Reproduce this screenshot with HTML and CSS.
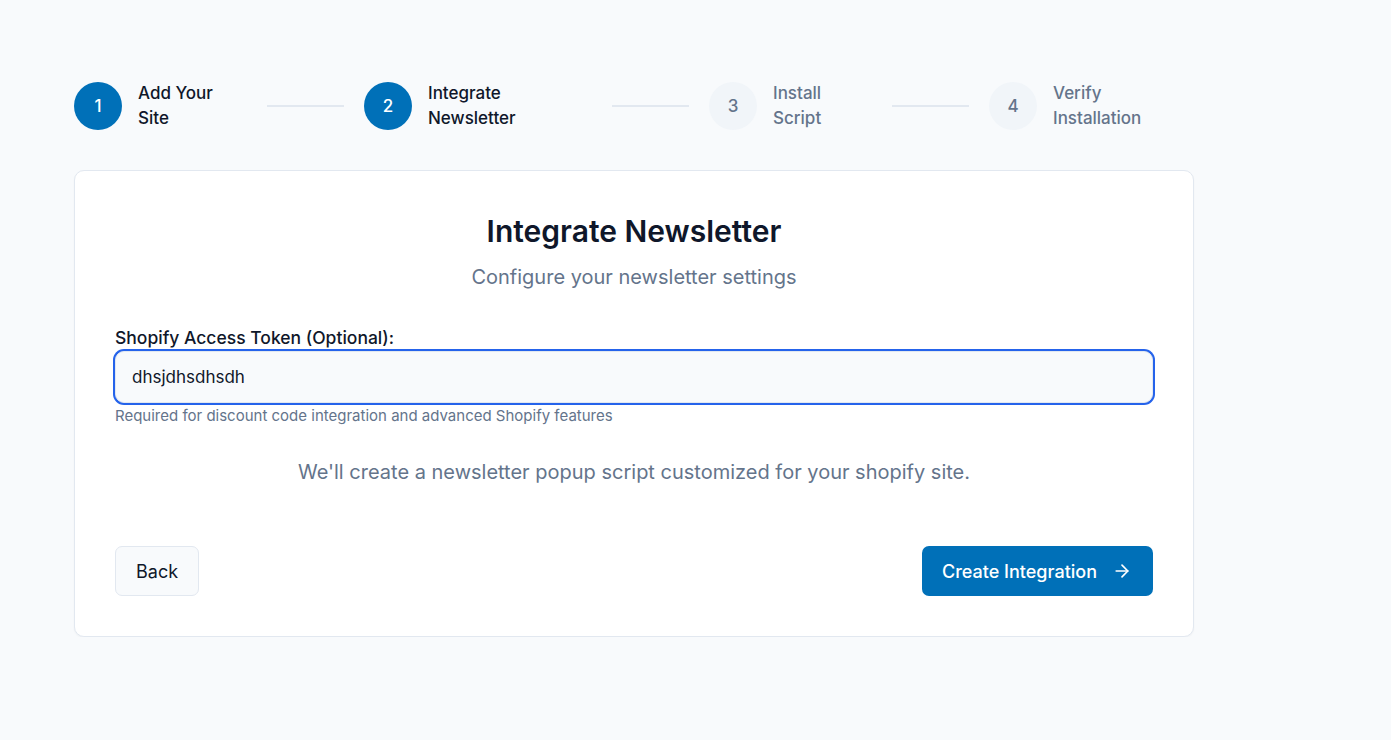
FILE: index.html
```html
<!DOCTYPE html>
<html lang="en">
<head>
<meta charset="utf-8">
<title>Integrate Newsletter</title>
<link rel="stylesheet" href="styles.css">
</head>
<body>
<main class="page">
  <div class="wrap">
    <ol class="stepper">
      <li class="step step-1 done">
        <span class="circle">1</span>
        <span class="label">Add Your Site</span>
      </li>
      <li class="connector"></li>
      <li class="step step-2 done">
        <span class="circle">2</span>
        <span class="label">Integrate Newsletter</span>
      </li>
      <li class="connector"></li>
      <li class="step step-3">
        <span class="circle">3</span>
        <span class="label">Install Script</span>
      </li>
      <li class="connector"></li>
      <li class="step step-4">
        <span class="circle">4</span>
        <span class="label">Verify Installation</span>
      </li>
    </ol>

    <section class="card">
      <header class="card-head">
        <h1 class="title">Integrate Newsletter</h1>
        <p class="subtitle">Configure your newsletter settings</p>
      </header>

      <div class="field">
        <label class="field-label" for="token">Shopify Access Token (Optional):</label>
        <input class="field-input" id="token" type="text" value="dhsjdhsdhsdh">
        <p class="field-help">Required for discount code integration and advanced Shopify features</p>
      </div>

      <p class="note">We'll create a newsletter popup script customized for your shopify site.</p>

      <div class="actions">
        <button class="btn btn-secondary" type="button">Back</button>
        <button class="btn btn-primary" type="button">
          <span>Create Integration</span>
          <svg class="icon" viewBox="0 0 24 24" width="20" height="20" fill="none" stroke="currentColor" stroke-width="2" stroke-linecap="round" stroke-linejoin="round" aria-hidden="true"><path d="M5 12h14"/><path d="m12 5 7 7-7 7"/></svg>
        </button>
      </div>
    </section>
  </div>
</main>
</body>
</html>
```

FILE: styles.css
```css
* { box-sizing: border-box; }

html, body {
  margin: 0;
  padding: 0;
  background: #f8fafc;
  font-family: Inter, "Noto Sans", "Liberation Sans", sans-serif;
  color: #0f172a;
}

.page {
  padding: 80px 0 0 74px;
}

.wrap {
  width: 1120px;
}

.stepper {
  list-style: none;
  margin: 0 0 39px 0;
  padding: 0;
  display: flex;
  align-items: center;
}

.step {
  display: flex;
  align-items: center;
  gap: 16px;
}

.step-1 { width: 173px; }
.step-2 { width: 228px; }
.step-3 { width: 163px; }
.step-4 { width: 204px; }

.circle {
  flex: none;
  width: 48px;
  height: 48px;
  border-radius: 50%;
  display: flex;
  align-items: center;
  justify-content: center;
  font-size: 17px;
  font-weight: 500;
  background: #f1f5f9;
  color: #64748b;
}

.step.done .circle {
  background: #0070b8;
  color: #ffffff;
}

.label {
  font-size: 17px;
  font-weight: 500;
  line-height: 25px;
  color: #64748b;
  padding-top: 1px;
}

.step.done .label {
  color: #0f172a;
}

.connector {
  flex: none;
  width: 77px;
  height: 2px;
  margin: 0 20px;
  background: #e2e8f0;
}

.card {
  background: #ffffff;
  border: 1px solid #e2e8f0;
  border-radius: 10px;
  box-shadow: 0 1px 2px rgba(15, 23, 42, 0.04);
  padding: 40px 40px 40px 40px;
}

.card-head {
  text-align: center;
  margin-bottom: 35px;
}

.title {
  margin: 0;
  font-size: 30px;
  line-height: 40px;
  font-weight: 600;
  color: #0f172a;
}

.subtitle {
  margin: 12px 0 0 0;
  font-size: 20px;
  line-height: 28px;
  color: #64748b;
}

.field-label {
  display: block;
  font-size: 17.5px;
  line-height: 24px;
  font-weight: 500;
  color: #0f172a;
  margin-bottom: 1px;
}

.field-input {
  display: block;
  width: 100%;
  height: 52px;
  padding: 0 16px;
  font-family: inherit;
  font-size: 17px;
  color: #0f172a;
  background: #f8fafc;
  border: 1px solid #e2e8f0;
  border-radius: 9px;
  outline: none;
  box-shadow: 0 0 0 2px #2563eb;
}

.field-help {
  margin: 3px 0 0 0;
  font-size: 15px;
  line-height: 20px;
  color: #64748b;
}

.note {
  margin: 32px 0 0 0;
  text-align: center;
  font-size: 20px;
  line-height: 28px;
  color: #64748b;
}

.actions {
  display: flex;
  justify-content: space-between;
  align-items: center;
  margin-top: 60px;
}

.btn {
  height: 50px;
  font-family: inherit;
  font-size: 18px;
  font-weight: 500;
  border-radius: 7px;
  cursor: pointer;
  display: inline-flex;
  align-items: center;
}

.btn-secondary {
  padding: 0 20px;
  background: #f8fafc;
  border: 1px solid #e2e8f0;
  color: #0f172a;
  font-weight: 400;
}

.btn-primary {
  padding: 0 21px 0 20px;
  gap: 15px;
  background: #0070b8;
  border: none;
  color: #ffffff;
}

.icon {
  flex: none;
}
```
